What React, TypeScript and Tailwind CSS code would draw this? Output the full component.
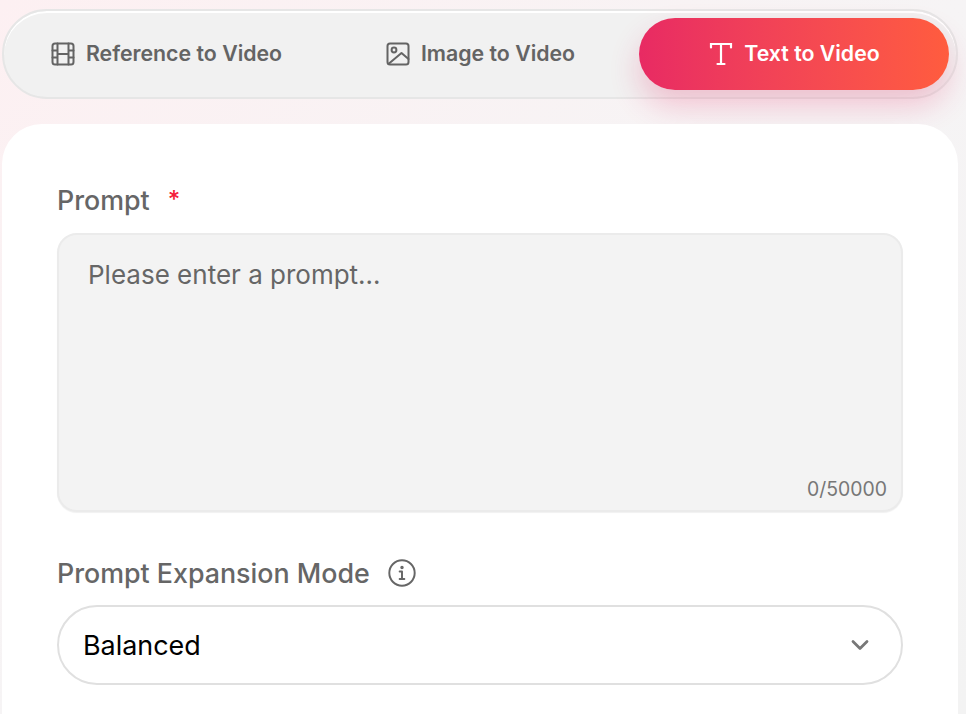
import { ChevronDown } from "lucide-react";

const font = "font-['Inter','Liberation_Sans',sans-serif]";

function FilmIcon() {
  return (
    <svg width="24" height="24" viewBox="0 0 24 24" fill="none" stroke="currentColor" strokeWidth="2" strokeLinejoin="round" strokeLinecap="round" className="ml-[1px]">
      <rect x="1.5" y="1.5" width="21" height="21" rx="2.5" />
      <path d="M6.5 1.5v21M17.5 1.5v21M6.5 12h11M1.5 8.5h5M1.5 15.5h5M17.5 8.5h5M17.5 15.5h5" />
    </svg>
  );
}

function PictureIcon() {
  return (
    <svg width="24" height="24" viewBox="0 0 24 24" fill="none" stroke="currentColor" strokeWidth="2" strokeLinejoin="round" strokeLinecap="round" className="ml-[1px]">
      <rect x="1.5" y="1.5" width="21" height="21" rx="2.5" />
      <circle cx="8" cy="8" r="2.4" />
      <path d="M3 21.5L15.5 11l7 6" />
    </svg>
  );
}

function TextIcon() {
  return (
    <svg width="24" height="24" viewBox="0 0 24 24" fill="none" stroke="currentColor" strokeWidth="2.2" strokeLinecap="round" className="ml-[1px]">
      <path d="M2 5.5V2h20v3.5M12 2v20M8.5 22h7" />
    </svg>
  );
}

function InfoIcon() {
  return (
    <svg width="28" height="28" viewBox="0 0 30 30" fill="none" stroke="currentColor" strokeWidth="2.1" strokeLinecap="round" strokeLinejoin="round">
      <circle cx="15" cy="15" r="13.6" />
      <path d="M12.5 13.5H15v8M12.5 21.5h5" />
      <circle cx="15" cy="9" r="0.8" fill="currentColor" />
    </svg>
  );
}

export default function App() {
  return (
    <div className={`${font} h-[714px] w-[966px] overflow-hidden bg-gradient-to-br from-[#fdf0f2] via-[#f6f4f5] to-[#f3f3f3] px-[2px] pt-[9px]`}>
      <div className="flex h-[90px] w-[956px] items-center gap-1 rounded-[45px] border-2 border-[#e6e6e6] bg-[#f1f1f1] px-[7px] shadow-[inset_0_2px_0_#ffffff]">
        <button className="flex h-[72px] flex-1 items-center justify-center gap-[11px] rounded-[36px] text-[21.3px] font-semibold text-[#646464]">
          <FilmIcon />
          Reference to Video
        </button>
        <button className="flex h-[72px] flex-1 items-center justify-center gap-[11px] rounded-[36px] text-[21.3px] font-semibold text-[#646464]">
          <PictureIcon />
          Image to Video
        </button>
        <button className="flex h-[72px] flex-1 items-center justify-center gap-[11px] rounded-[36px] bg-gradient-to-r from-[#e82a63] to-[#ff5c3e] text-[21.3px] font-semibold text-white shadow-[0_16px_30px_rgba(232,42,99,0.24)]">
          <TextIcon />
          Text to Video
        </button>
      </div>

      <div className="relative mt-[25px] h-[640px] w-[956px] rounded-t-[40px] bg-white px-[55px] pt-[59px]">
        <div className="flex h-[34px] items-center text-[26.8px] font-medium text-[#666666]">
          Prompt
          <span className="ml-[18px] text-[24px] text-[#f5203a]">*</span>
        </div>
        <div className="relative mt-[16px] h-[279px] rounded-[20px] border-2 border-[#ebebeb] bg-[#f3f3f3] px-[29px] py-[20px] text-[26px] text-[#666666] shadow-[0_1px_1px_rgba(0,0,0,0.06)]">
          Please enter a prompt…
          <span className="absolute right-[14px] bottom-[6px] text-[19.4px] text-[#777777]">0/50000</span>
        </div>
        <div className="mt-[44px] flex h-[34px] items-center gap-[18px] text-[26.8px] font-medium text-[#666666]">
          Prompt Expansion Mode
          <InfoIcon />
        </div>
        <div className="mt-[15px] flex h-[80px] items-center justify-between rounded-[40px] border-2 border-[#e0e0e0] bg-white pr-[27px] pl-[24px] text-[26.9px] text-black">
          Balanced
          <ChevronDown size={28} strokeWidth={2.4} className="text-[#777777]" />
        </div>
      </div>
    </div>
  );
}
